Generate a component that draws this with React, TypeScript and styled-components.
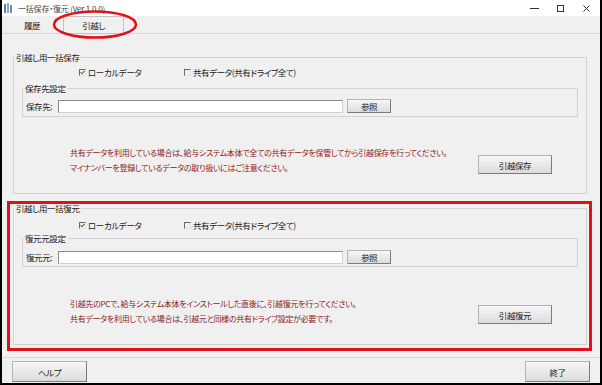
import React from 'react';
import styled, { createGlobalStyle } from 'styled-components';

const GlobalStyle = createGlobalStyle`
    html, body {
        margin: 0;
        padding: 0;
        background: #ffffff;
    }
    body {
        font-family: "Noto Sans CJK JP", "Noto Sans", sans-serif;
        font-size: 8.5px;
        letter-spacing: -0.4px;
        color: #1a1a1a;
        font-feature-settings: "palt";
    }
`;

const Window = styled.div`
    position: relative;
    width: 602px;
    height: 385px;
    box-sizing: border-box;
    background: #f0f0f0;
    border: 2px solid #000;
    border-top: none;
    display: flex;
    flex-direction: column;
`;

const TitleBar = styled.div`
    height: 16px;
    background: #ffffff;
    display: flex;
    align-items: center;
    padding-left: 2px;
    color: #444;
    font-size: 8px;
    letter-spacing: -0.2px;
`;

const TitleText = styled.span`
    margin-left: 6px;
    flex: 1;
    white-space: nowrap;
`;

const Controls = styled.div`
    display: flex;
    align-items: center;
    gap: 17px;
    padding-right: 9px;
`;

const Tabs = styled.div`
    height: 17px;
    border-bottom: 1px solid #d9d9d9;
    display: flex;
    align-items: flex-end;
    padding-left: 12px;
`;

const Tab = styled.div<{ $active?: boolean }>`
    box-sizing: border-box;
    height: ${(p) => (p.$active ? '18px' : '15px')};
    line-height: ${(p) => (p.$active ? '16px' : '15px')};
    padding: 0 10px;
    margin-left: ${(p) => (p.$active ? '13px' : '0')};
    margin-bottom: ${(p) => (p.$active ? '-1px' : '0')};
    width: ${(p) => (p.$active ? '61px' : 'auto')};
    text-align: center;
    border: ${(p) => (p.$active ? '1px solid #c4c4c4' : 'none')};
    background: #f0f0f0;
    white-space: nowrap;
`;

const Highlight = styled.svg`
    position: absolute;
    left: 50px;
    top: 10px;
`;

const Page = styled.div`
    flex: 1;
    padding: 0 9px 0 5px;
    display: flex;
    flex-direction: column;
    align-items: flex-start;
`;

const Group = styled.fieldset<{ $top?: number; $left?: number }>`
    box-sizing: border-box;
    width: 574px;
    margin: ${(p) => p.$top ?? 0}px 0 0 ${(p) => p.$left ?? 0}px;
    padding: 0;
    border: 1px solid #d2d2d2;
    min-inline-size: 0;
`;

const SubGroup = styled.fieldset<{ $top: number }>`
    box-sizing: border-box;
    width: 556px;
    margin: ${(p) => p.$top}px 0 0 0;
    padding: 0;
    border: 1px solid #d2d2d2;
    min-inline-size: 0;
`;

const Legend = styled.legend`
    padding: 0 2px;
    line-height: 8px;
    white-space: nowrap;
`;

const GroupBody = styled.div<{ $top: number }>`
    padding: ${(p) => p.$top}px 8px 18px 8px;
`;

const SubBody = styled.div<{ $top: number; $bottom: number }>`
    padding: ${(p) => p.$top}px 3px ${(p) => p.$bottom}px 3px;
`;

const CheckRow = styled.div`
    height: 12px;
    display: grid;
    grid-template-columns: 105px auto;
    align-items: center;
    padding-left: 57px;
`;

const CheckItem = styled.label`
    display: flex;
    align-items: center;
    gap: 2px;
    white-space: nowrap;
`;

const Box = styled.span`
    box-sizing: border-box;
    width: 7px;
    height: 7px;
    border-top: 1px solid #6a6a6a;
    border-left: 1px solid #6a6a6a;
    border-right: 1px solid #e4e4e4;
    border-bottom: 1px solid #e4e4e4;
    display: inline-flex;
    align-items: center;
    justify-content: center;
`;

const InputRow = styled.div`
    height: 14px;
    display: flex;
    align-items: center;
`;

const FieldLabel = styled.span`
    width: 32px;
    white-space: nowrap;
`;

const PathInput = styled.div`
    box-sizing: border-box;
    width: 285px;
    height: 13px;
    background: #ffffff;
    border: 1px solid #8a8a8a;
    border-right-color: #cfcfcf;
    border-bottom-color: #cfcfcf;
`;

const Button = styled.button<{ $w: number; $h: number }>`
    box-sizing: border-box;
    width: ${(p) => p.$w}px;
    height: ${(p) => p.$h}px;
    padding: 0;
    font: inherit;
    letter-spacing: inherit;
    color: #222;
    background: linear-gradient(#f7f7f7, #dcdcdc);
    border: 1px solid #b4b4b4;
    border-right-color: #7c7c7c;
    border-bottom-color: #7c7c7c;
    border-radius: 0;
`;

const BrowseButton = styled(Button)`
    margin-left: 4px;
`;

const NoticeRow = styled.div<{ $top: number }>`
    margin-top: ${(p) => p.$top}px;
    display: flex;
    align-items: flex-start;
`;

const Notes = styled.div`
    flex: 1;
    min-width: 0;
    padding-left: 48px;
    line-height: 15px;
    font-size: 8px;
    letter-spacing: -0.3px;
    color: #8c2020;
    white-space: nowrap;
`;

const ActionButton = styled(Button)<{ $offset: number }>`
    margin-top: ${(p) => p.$offset}px;
    margin-right: 26px;
`;

const RedFrame = styled.div`
    box-sizing: border-box;
    width: 585px;
    margin-top: 7px;
    padding: 0 2px 3px 3px;
    border: 3px solid #e3101a;
`;

const Footer = styled.div`
    height: 26px;
    box-sizing: border-box;
    border-top: 1px solid #d9d9d9;
    padding: 3px 10px 0 10px;
    display: flex;
    justify-content: space-between;
    align-items: flex-start;
`;

const Check = ({ checked, label }: { checked?: boolean; label: string }) => (
    <CheckItem>
        <Box>
            {checked && (
                <svg width="5" height="5" viewBox="0 0 5 5">
                    <path d="M0.5 2.3 L2 3.8 L4.6 0.8" fill="none" stroke="#222" strokeWidth="1" />
                </svg>
            )}
        </Box>
        {label}
    </CheckItem>
);

export default function App() {
    return (
        <>
            <GlobalStyle />
            <Window>
                <TitleBar>
                    <svg width="8" height="10" viewBox="0 0 8 10">
                        <rect x="0" y="1" width="2" height="9" fill="#5b7fa6" />
                        <rect x="3" y="0" width="2" height="10" fill="#8aa5c2" />
                        <rect x="6" y="2" width="2" height="8" fill="#6d8db0" />
                    </svg>
                    <TitleText>一括保存・復元 (Ver 1.0.0)</TitleText>
                    <Controls>
                        <svg width="9" height="9" viewBox="0 0 9 9">
                            <path d="M0 4.5 H9" stroke="#333" strokeWidth="1" />
                        </svg>
                        <svg width="9" height="9" viewBox="0 0 9 9">
                            <rect x="1.5" y="1.5" width="6" height="6" fill="none" stroke="#333" strokeWidth="1" />
                        </svg>
                        <svg width="9" height="9" viewBox="0 0 9 9">
                            <path d="M1.5 1.5 L7.5 7.5 M7.5 1.5 L1.5 7.5" stroke="#333" strokeWidth="1" />
                        </svg>
                    </Controls>
                </TitleBar>

                <Tabs>
                    <Tab>履歴</Tab>
                    <Tab $active>引越し</Tab>
                </Tabs>

                <Page>
                    <Group $top={19} $left={6}>
                        <Legend>引越し用一括保存</Legend>
                        <GroupBody $top={5}>
                            <CheckRow>
                                <Check checked label="ローカルデータ" />
                                <Check label="共有データ(共有ドライブ全て)" />
                            </CheckRow>
                            <SubGroup $top={6}>
                                <Legend>保存先設定</Legend>
                                <SubBody $top={7} $bottom={3}>
                                    <InputRow>
                                        <FieldLabel>保存先:</FieldLabel>
                                        <PathInput />
                                        <BrowseButton $w={44} $h={14}>参照</BrowseButton>
                                    </InputRow>
                                </SubBody>
                            </SubGroup>
                            <NoticeRow $top={28}>
                                <Notes>
                                    共有データを利用している場合は、給与システム本体で全ての共有データを保管してから引越保存を行ってください。
                                    <br />
                                    マイナンバーを登録しているデータの取り扱いにはご注意ください。
                                </Notes>
                                <ActionButton $w={74} $h={19} $offset={10}>引越保存</ActionButton>
                            </NoticeRow>
                        </GroupBody>
                    </Group>

                    <RedFrame>
                        <Group>
                            <Legend>引越し用一括復元</Legend>
                            <GroupBody $top={7}>
                                <CheckRow>
                                    <Check checked label="ローカルデータ" />
                                    <Check label="共有データ(共有ドライブ全て)" />
                                </CheckRow>
                                <SubGroup $top={3}>
                                    <Legend>復元元設定</Legend>
                                    <SubBody $top={8} $bottom={2}>
                                        <InputRow>
                                            <FieldLabel>復元元:</FieldLabel>
                                            <PathInput />
                                            <BrowseButton $w={44} $h={14}>参照</BrowseButton>
                                        </InputRow>
                                    </SubBody>
                                </SubGroup>
                                <NoticeRow $top={29}>
                                    <Notes>
                                        引越先のPCで、給与システム本体をインストールした直後に、引越復元を行ってください。
                                        <br />
                                        共有データを利用している場合は、引越元と同様の共有ドライブ設定が必要です。
                                    </Notes>
                                    <ActionButton $w={74} $h={19} $offset={9}>引越復元</ActionButton>
                                </NoticeRow>
                            </GroupBody>
                        </Group>
                    </RedFrame>
                </Page>

                <Footer>
                    <Button $w={75} $h={21}>ヘルプ</Button>
                    <Button $w={65} $h={21}>終了</Button>
                </Footer>

                <Highlight width="88" height="30" viewBox="0 0 88 30">
                    <ellipse cx="43" cy="14.5" rx="41" ry="13" fill="none" stroke="#e3101a" strokeWidth="2.5" />
                </Highlight>
            </Window>
        </>
    );
}
